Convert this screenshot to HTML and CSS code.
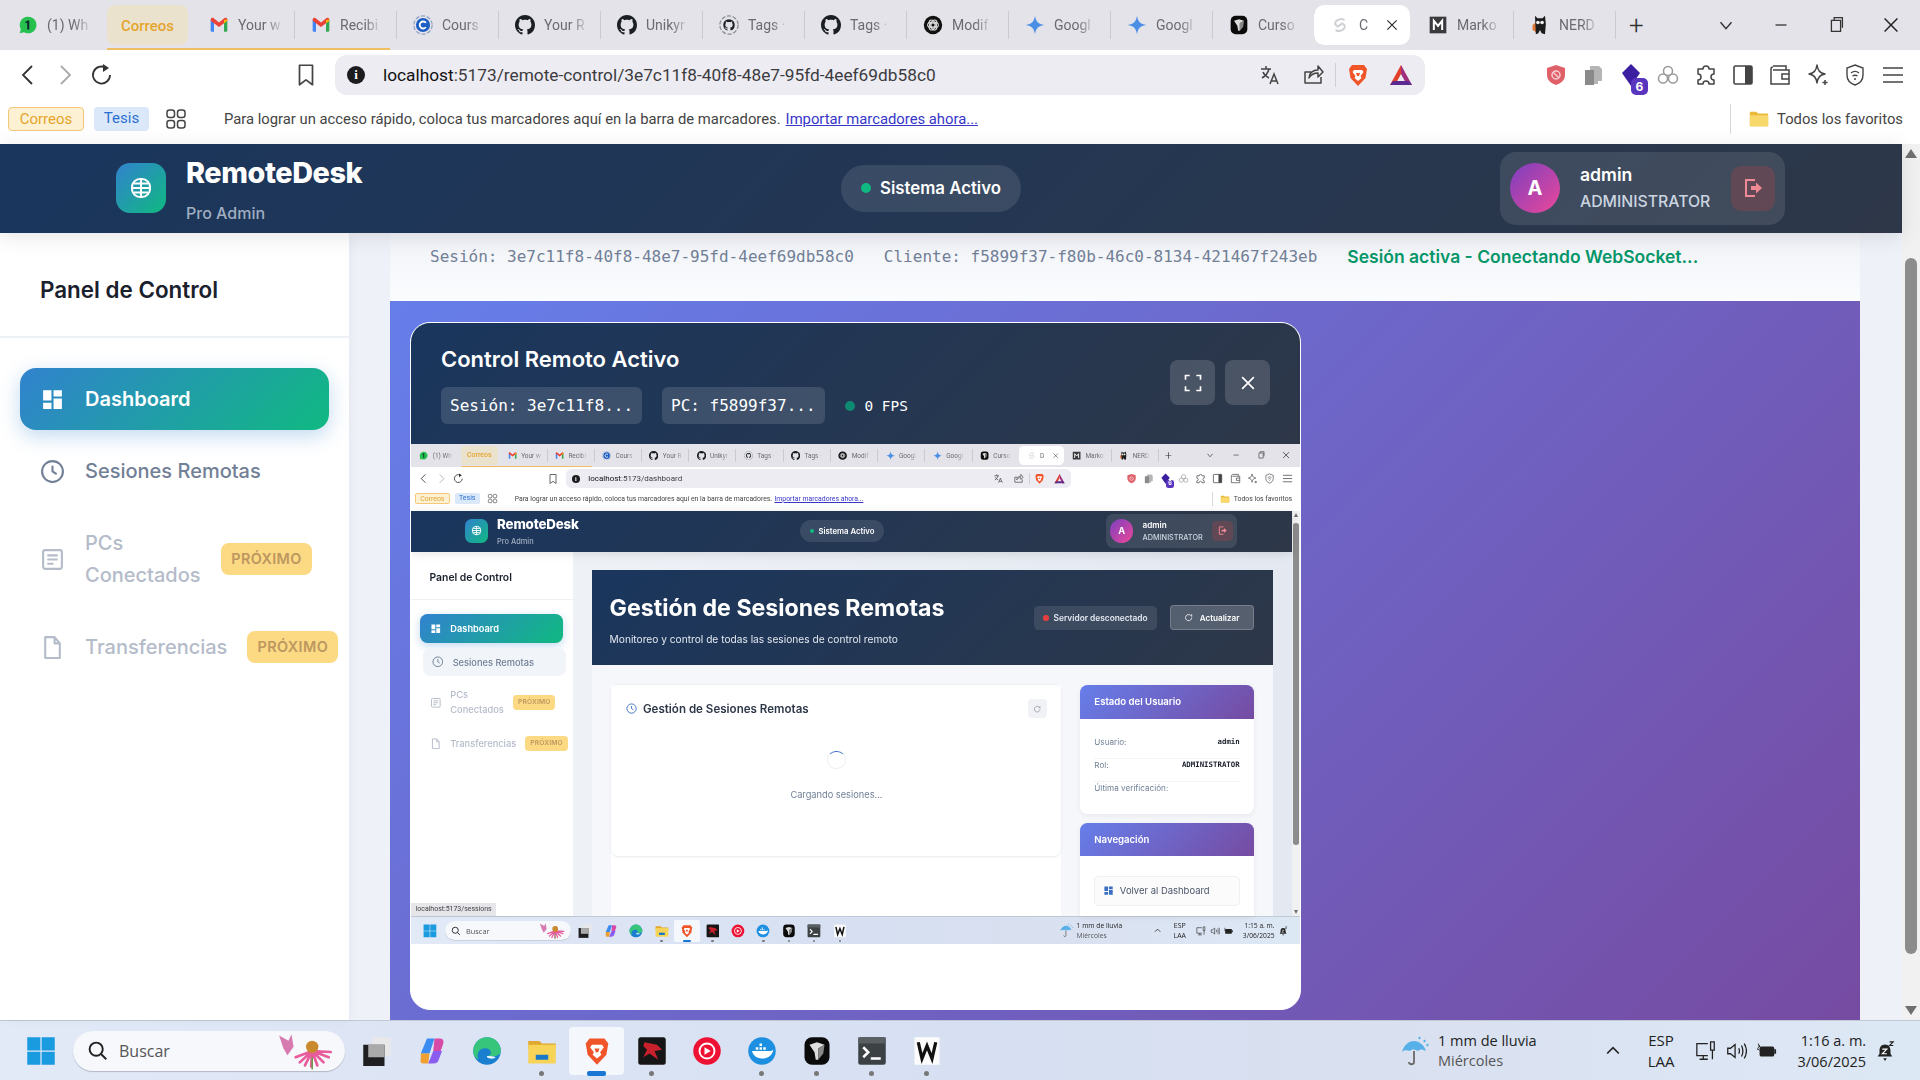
FILE: index.html
```html
<!DOCTYPE html>
<html lang="es">
<head>
    <meta charset="UTF-8">
    <meta name="viewport" content="width=device-width, initial-scale=1.0">
    <title>RemoteDesk - Control Remoto</title>
    <link rel="stylesheet" href="styles.css">
</head>
<body>
    <!-- icon set, used by both the real page and the screenshot inside it -->
    <svg class="icon-defs" xmlns="http://www.w3.org/2000/svg">
        <symbol id="i-wa" viewBox="0 0 24 24"><path fill="#25c04e" d="M12 2a10 10 0 0 0-8.6 15L2 22l5.2-1.3A10 10 0 1 0 12 2z"/><path fill="#123" d="M13.5 6.500v11h-2.400V9.300L9 10V8l2.900-1.500z"/></symbol>
        <symbol id="i-gmail" viewBox="0 0 24 24"><path fill="#4285f4" d="M2 6h4v14H3.500A1.500 1.500 0 0 1 2 18.500z"/><path fill="#34a853" d="M18 6h4v12.500a1.500 1.500 0 0 1-1.500 1.500H18z"/><path fill="#ea4335" d="M2 5.500C2 3.500 4.300 2.700 5.700 3.800L12 9l6.300-5.200C19.700 2.700 22 3.500 22 5.500V7l-4 3-6 4.500L6 10 2 7z"/><path fill="#fbbc04" d="M18 6l4-.5V7l-4 3z"/></symbol>
        <symbol id="i-coursera" viewBox="0 0 24 24"><circle cx="12" cy="12" r="11" fill="none" stroke="#8fa3c4" stroke-width="1.5" stroke-dasharray="5 2"/><circle cx="12" cy="12" r="8.5" fill="#1f5fc4"/><path d="M15.500 9.300a4.200 4.200 0 1 0 0 5.400" fill="none" stroke="#fff" stroke-width="2.2"/></symbol>
        <symbol id="i-gh" viewBox="0 0 16 16"><path fill="#1b1f24" d="M8 0C3.580 0 0 3.580 0 8c0 3.540 2.290 6.530 5.470 7.590.4.070.55-.17.55-.38 0-.19-.01-.82-.01-1.490-2.010.37-2.530-.49-2.690-.94-.09-.23-.48-.94-.82-1.130-.28-.15-.68-.52-.01-.53.63-.01 1.080.58 1.230.82.72 1.210 1.870.87 2.330.66.070-.52.28-.87.51-1.070-1.780-.2-3.640-.89-3.640-3.950 0-.87.31-1.590.82-2.150-.08-.2-.36-1.020.08-2.120 0 0 .67-.21 2.200.82.64-.18 1.320-.27 2-.27.68 0 1.360.09 2 .27 1.530-1.040 2.200-.82 2.200-.82.44 1.100.16 1.920.08 2.120.51.56.82 1.270.82 2.150 0 3.070-1.870 3.750-3.650 3.950.29.25.54.73.54 1.480 0 1.070-.01 1.930-.01 2.200 0 .21.15.46.55.38A8.013 8.013 0 0 0 16 8c0-4.420-3.580-8-8-8z"/></symbol>
        <symbol id="i-gh-ring" viewBox="0 0 24 24"><circle cx="12" cy="12" r="11" fill="none" stroke="#8a8f98" stroke-width="1.6" stroke-dasharray="5 2"/><svg x="5" y="5" width="14" height="14" viewBox="0 0 16 16"><use href="#i-gh"/></svg></symbol>
        <symbol id="i-ai" viewBox="0 0 24 24"><circle cx="12" cy="12" r="11" fill="#111"/><g fill="none" stroke="#ddd" stroke-width="1.3"><circle cx="12" cy="12" r="2.5"/><ellipse cx="12" cy="12" rx="6.5" ry="3.5"/><ellipse cx="12" cy="12" rx="6.5" ry="3.5" transform="rotate(60 12 12)"/><ellipse cx="12" cy="12" rx="6.5" ry="3.5" transform="rotate(120 12 12)"/></g></symbol>
        <symbol id="i-gem" viewBox="0 0 24 24"><path fill="#4a8ee6" d="M12 1c1 7 4 10 11 11-7 1-10 4-11 11-1-7-4-10-11-11 7-1 10-4 11-11z"/></symbol>
        <symbol id="i-cursor" viewBox="0 0 24 24"><rect x="2" y="1" width="20" height="22" rx="6" fill="#0b0b0b"/><path fill="#ddd" d="M6 7l6-2 6 2-5 3v9l-2 0-1-6z"/><path fill="#888" d="M13 10l5-3-1 7-4 5z"/></symbol>
        <symbol id="i-svelte" viewBox="0 0 24 24"><path fill="none" stroke="#cfd0d4" stroke-width="2.4" stroke-linecap="round" d="M16.500 5.500c-3-2-5.500-.5-8 1-2.500 1.500-3 4.500-1 6M7.500 18.500c3 2 5.500.5 8-1 2.500-1.500 3-4.500 1-6M9 14l6-4"/></symbol>
        <symbol id="i-md" viewBox="0 0 24 24"><rect x="2" y="2" width="20" height="20" fill="#3a3a3e"/><path fill="none" stroke="#fff" stroke-width="2.4" d="M7 18V7l5 6 5-6v11"/></symbol>
        <symbol id="i-nerd" viewBox="0 0 24 24"><path fill="#e0793a" d="M3 12l4-3 1 12-5-3z"/><path fill="#1b1b1b" d="M6 1l3 3h6l3-3 1 10-1 12-4-1-2-4-2 4-3 1z"/><circle cx="9.5" cy="9" r="2.2" fill="#eee"/><circle cx="14.5" cy="9" r="2.2" fill="#eee"/></symbol>
        <symbol id="i-brave" viewBox="0 0 24 24"><path fill="#f0552a" d="M6 2h12l3 4-1.500 9L12 23 4.500 15 3 6z"/><path fill="#fff" d="M8 7h8l1.500 2-3 4 1 2-3.500 3-3.500-3 1-2-3-4z"/><path fill="#f0552a" d="M10 10h4l-1 3h-2z"/></symbol>
        <symbol id="i-bat" viewBox="0 0 24 24"><path fill="#e2402b" d="M12 2L1 22h5l6-11 1-6z"/><path fill="#a12e7c" d="M12 2l11 20h-5l-6-11z"/><path fill="#5b2a90" d="M1 22h22l-3-4H4z"/></symbol>
        <symbol id="i-translate" viewBox="0 0 24 24"><path fill="none" stroke="#444" stroke-width="1.5" d="M3 6h10M8 3v3M11 6c-1 4-3.500 7-7 9M5 9c1 2.500 3 4.500 6 6M12 21l4-10 4 10M13.500 18h5"/></symbol>
        <symbol id="i-share" viewBox="0 0 24 24"><path fill="none" stroke="#444" stroke-width="1.5" stroke-linejoin="round" d="M20 14v6H4V9h6M8 15c0-5 4-8 9-8V3l5 6-5 5v-4c-4 0-7 1.500-9 5z"/></symbol>
        <symbol id="i-shield" viewBox="0 0 24 24"><path fill="#e0606a" d="M12 2l9 3v7c0 5-4 8.500-9 10-5-1.500-9-5-9-10V5z"/><circle cx="12" cy="12" r="4" fill="none" stroke="#f7cdd0" stroke-width="1.5"/><path stroke="#f7cdd0" stroke-width="1.5" d="M9 9l6 6"/></symbol>
        <symbol id="i-pages" viewBox="0 0 24 24"><path fill="#b5b5b5" d="M9 3h9l3 3v12h-4v3H6V8h3z"/><path fill="#8a8a8a" d="M4 7h9v15H4z"/></symbol>
        <symbol id="i-gem-ext" viewBox="0 0 24 24"><path fill="#3b1fa0" d="M12 1l9 9-9 13-9-13z"/></symbol>
        <symbol id="i-rings" viewBox="0 0 24 24"><g fill="none" stroke="#9a9a9a" stroke-width="1.5"><circle cx="12" cy="8" r="4.5"/><circle cx="7" cy="15.5" r="4.5"/><circle cx="17" cy="15.5" r="4.5"/></g></symbol>
        <symbol id="i-puzzle" viewBox="0 0 24 24"><path fill="none" stroke="#444" stroke-width="1.5" stroke-linejoin="round" d="M9 6a3 3 0 1 1 6 0h5v5a3 3 0 1 0 0 6v4h-5a3 3 0 1 0-6 0H4v-4a3 3 0 1 0 0-6V6z"/></symbol>
        <symbol id="i-panel" viewBox="0 0 24 24"><rect x="3" y="3" width="18" height="18" rx="1.5" fill="none" stroke="#444" stroke-width="1.6"/><rect x="14" y="3" width="7" height="18" fill="#444"/></symbol>
        <symbol id="i-wallet" viewBox="0 0 24 24"><path fill="none" stroke="#444" stroke-width="1.5" d="M5 3h13v4M3 6a2 2 0 0 1 2-2v0M3 6v15h18V7H5M21 11h-7v5h7"/></symbol>
        <symbol id="i-leo" viewBox="0 0 24 24"><path fill="none" stroke="#444" stroke-width="1.5" stroke-linejoin="round" d="M11 2c1 6 3 8 8 9-5 1-7 3-8 9-1-6-3-8-8-9 5-1 7-3 8-9zM19 17v5M16.500 19.500h5"/></symbol>
        <symbol id="i-vpn" viewBox="0 0 24 24"><path fill="none" stroke="#444" stroke-width="1.4" d="M12 2l8 3v7c0 5-3.500 8.500-8 10-4.500-1.500-8-5-8-10V5zM8 10c2.500-2 5.500-2 8 0M9.500 13c1.500-1 3.500-1 5 0"/><circle cx="12" cy="16" r="1" fill="#444"/></symbol>
        <symbol id="i-bookmark" viewBox="0 0 24 24"><path fill="none" stroke="#444" stroke-width="1.6" stroke-linejoin="round" d="M6 3h12v18l-6-4.500L6 21z"/></symbol>
        <symbol id="i-apps" viewBox="0 0 24 24"><g fill="none" stroke="#444" stroke-width="1.5"><rect x="3" y="3" width="7.5" height="7.5" rx="2.5"/><rect x="13.5" y="3" width="7.5" height="7.5" rx="2.5"/><rect x="3" y="13.5" width="7.5" height="7.5" rx="2.5"/><rect x="13.5" y="13.5" width="7.5" height="7.5" rx="2.5"/></g></symbol>
        <symbol id="i-folder" viewBox="0 0 24 24"><path fill="#e8b93a" d="M2 5a1 1 0 0 1 1-1h6l2 2h10a1 1 0 0 1 1 1v12a1 1 0 0 1-1 1H3a1 1 0 0 1-1-1z"/><path fill="#f8d76b" d="M2 8h20v11a1 1 0 0 1-1 1H3a1 1 0 0 1-1-1z"/></symbol>
        <symbol id="i-close-dark" viewBox="0 0 24 24"><path fill="none" stroke="#222" stroke-width="1.6" d="M5 5l14 14M19 5L5 19"/></symbol>
        <symbol id="i-chev" viewBox="0 0 24 24"><path fill="none" stroke="#333" stroke-width="1.6" d="M6 9l6 7 6-7"/></symbol>
        <symbol id="i-chev-up" viewBox="0 0 24 24"><path fill="none" stroke="#222" stroke-width="2" d="M5 15l7-7 7 7"/></symbol>
        <symbol id="i-min" viewBox="0 0 24 24"><path stroke="#333" stroke-width="1.4" d="M6 12h12"/></symbol>
        <symbol id="i-restore" viewBox="0 0 24 24"><path fill="none" stroke="#333" stroke-width="1.4" d="M7 7h10v12H7zM10 7V4h9v11"/></symbol>
        <symbol id="i-back" viewBox="0 0 24 24"><path fill="none" stroke="#333" stroke-width="1.8" d="M16 3l-9 9 9 9"/></symbol>
        <symbol id="i-fwd" viewBox="0 0 24 24"><path fill="none" stroke="#aaa" stroke-width="1.8" d="M8 3l9 9-9 9"/></symbol>
        <symbol id="i-reload" viewBox="0 0 24 24"><path fill="none" stroke="#333" stroke-width="1.8" d="M20 12a8.500 8.500 0 1 1-4-7.200"/><path fill="#333" d="M13 1l6 4-6 4z"/></symbol>
        <symbol id="i-menu" viewBox="0 0 24 24"><path stroke="#444" stroke-width="1.6" d="M2 5h20M2 12h20M2 19h20"/></symbol>

        <symbol id="i-globe" viewBox="0 0 24 24"><g fill="none" stroke="#fff" stroke-width="2"><rect x="3" y="3" width="18" height="18" rx="8"/><path d="M3 12h18M5 7.500h14M5 16.500h14M12 3v18"/></g></symbol>
        <symbol id="i-logout" viewBox="0 0 24 24"><path fill="none" stroke="#f08a94" stroke-width="2" d="M14 4H5v16h9"/><path fill="#f08a94" d="M10 10h5V6.500l6 5.500-6 5.500V14h-5z"/></symbol>
        <symbol id="i-dash" viewBox="0 0 24 24"><path fill="currentColor" d="M3 3h8v10H3zM13 3h8v6h-8zM13 11h8v10h-8zM3 15h8v6H3z"/></symbol>
        <symbol id="i-clock" viewBox="0 0 24 24"><g fill="none" stroke="currentColor" stroke-width="2"><circle cx="12" cy="12" r="10"/><path d="M12 6.500V12l4 2.500"/></g></symbol>
        <symbol id="i-news" viewBox="0 0 24 24"><g fill="none" stroke="currentColor" stroke-width="2"><rect x="3" y="3" width="18" height="18" rx="2"/><path d="M7 8h10M7 12h10M7 16h6"/></g></symbol>
        <symbol id="i-file" viewBox="0 0 24 24"><path fill="none" stroke="currentColor" stroke-width="2" stroke-linejoin="round" d="M5 2h9l5 6v14H5zM14 2v6h5"/></symbol>
        <symbol id="i-expand" viewBox="0 0 24 24"><path fill="none" stroke="#fff" stroke-width="2" d="M3 8V3h5M16 3h5v5M21 16v5h-5M8 21H3v-5"/></symbol>
        <symbol id="i-close" viewBox="0 0 24 24"><path fill="none" stroke="#fff" stroke-width="2" d="M5 5l14 14M19 5L5 19"/></symbol>
        <symbol id="i-refresh" viewBox="0 0 24 24"><path fill="none" stroke="currentColor" stroke-width="2" d="M20 12a8 8 0 1 1-2.500-5.800L20 9V3"/></symbol>

        <symbol id="i-win" viewBox="0 0 24 24"><path fill="#1a9be0" d="M1 1h10.500v10.500H1zM12.500 1H23v10.500H12.500zM1 12.500h10.500V23H1zM12.500 12.500H23V23H12.500z"/></symbol>
        <symbol id="i-search" viewBox="0 0 24 24"><g fill="none" stroke="#222" stroke-width="2.2"><circle cx="10.5" cy="10.5" r="7.5"/><path d="M16 16l6 6"/></g></symbol>
        <symbol id="i-flower" viewBox="0 0 60 36"><g stroke="#e85c9c" stroke-width="2.6" stroke-linecap="round"><path d="M36 18L20 24M36 18L24 29M36 18L29 32M36 18L35 33M36 18L41 32M36 18L47 29M36 18L52 24M36 18L54 19"/></g><circle cx="36" cy="14" r="6" fill="#c98a2e"/><path stroke="#6a9a4a" stroke-width="1.5" d="M36 24v12"/><path fill="#d77ab0" d="M4 3l9 5 3-6 2 12-6 8-4-7z"/></symbol>
        <symbol id="i-task" viewBox="0 0 24 24"><rect x="8" y="1" width="15" height="15" fill="#e8e8ea"/><rect x="1" y="7" width="17" height="17" fill="#1f1f22"/><rect x="5" y="7" width="13" height="10" fill="#aaa"/></symbol>
        <symbol id="i-copilot" viewBox="0 0 24 24"><path fill="#3a8cf0" d="M8 2h6l-4 12H3z"/><path fill="#f0a030" d="M3 14h7l-1 8H5q-3 0-2-4z"/><path fill="#d84aa8" d="M14 2h4q4 0 3 4l-2 6h-6z"/><path fill="#8a5cf0" d="M13 12h7l-3 8q-1 2-4 2H9z"/></symbol>
        <symbol id="i-edge" viewBox="0 0 24 24"><circle cx="12" cy="12" r="11" fill="#1b7fd0"/><path fill="#37c57c" d="M1 12a11 11 0 0 1 22 0c0 2-2 4-5 4h-5c3-1 3-5-1-6-5-1-9 3-7 9-3-2-4-4-4-7z"/><path fill="#eaf6fb" d="M12 16c3 0 5 0 7 1-1 1-4 2-7 0z"/></symbol>
        <symbol id="i-explorer" viewBox="0 0 24 24"><path fill="#e0a82e" d="M1 4h9l2 2h11v4H1z"/><path fill="#f7d358" d="M1 7h22v15H1z"/><rect x="7" y="15" width="10" height="4" fill="#1a78c8"/></symbol>
        <symbol id="i-msi" viewBox="0 0 24 24"><rect x="1" y="1" width="22" height="22" rx="2" fill="#161616"/><path fill="#c8202c" d="M6 5l10 2 4 4-6 1 3 7-7-5-5 3 3-6-3-3z"/></symbol>
        <symbol id="i-yt" viewBox="0 0 24 24"><circle cx="12" cy="12" r="11" fill="#ee1133"/><circle cx="12" cy="12" r="6" fill="none" stroke="#fff" stroke-width="1.5"/><path fill="#fff" d="M10 9l5 3-5 3z"/></symbol>
        <symbol id="i-docker" viewBox="0 0 24 24"><circle cx="12" cy="12" r="11" fill="#1d8fe0"/><path fill="#fff" d="M4 12h15c1 0 1.500-1 2-1-.5 4-4 7-8 7-5 0-8-2-9-6z"/><path fill="#fff" d="M7 9h2v2H7zM10 9h2v2h-2zM13 9h2v2h-2zM10 6h2v2h-2z"/></symbol>
        <symbol id="i-term" viewBox="0 0 24 24"><rect x="1" y="1" width="22" height="22" rx="2" fill="#3c4144"/><rect x="1" y="1" width="22" height="5" fill="#5a5f62"/><path fill="none" stroke="#fff" stroke-width="2" d="M5 9l4 4-4 4M11 18h8"/></symbol>
        <symbol id="i-word" viewBox="0 0 24 24"><rect x="2" y="1" width="20" height="22" fill="#fbfbfb"/><path fill="none" stroke="#111" stroke-width="2.6" d="M5 5l3 13 4-10 4 10 3-13"/></symbol>
        <symbol id="i-umbrella" viewBox="0 0 32 32"><path fill="#58b0e8" d="M3 17c2-8 8-11 12-11s10 3 12 10c-3-2-6-2-8 0-3-2-6-2-8 0-3-1-6-1-8 1z"/><path fill="none" stroke="#6a6a6a" stroke-width="1.8" d="M15 16v11c0 3-5 3-5 0"/><path stroke="#58b0e8" stroke-width="2" d="M20 4l1-2M25 7l1-2M28 11l1-2"/></symbol>
        <symbol id="i-monitor" viewBox="0 0 24 24"><path fill="none" stroke="#222" stroke-width="1.4" d="M14 4H2v13h12M5 21h9M9 17v4M17 2h4v9h-4zM19 11v10"/></symbol>
        <symbol id="i-volume" viewBox="0 0 24 24"><path fill="none" stroke="#222" stroke-width="1.4" d="M3 9v6h3l5 4V5L6 9zM15 9c1 2 1 4 0 6M18 6c2 4 2 8 0 12M21 4c3 5 3 11 0 16"/></symbol>
        <symbol id="i-battery" viewBox="0 0 24 24"><rect x="5" y="7" width="16" height="11" rx="2" fill="#222"/><path fill="#222" d="M21 10h2v5h-2zM3 3l3 4-3 2 3 3-4-2 2-3z"/></symbol>
        <symbol id="i-bell" viewBox="0 0 24 24"><path fill="#222" d="M12 5c-4 0-6 3-6 7v3l-2 3h16l-2-3v-3c0-4-2-7-6-7zM10 20h4l-2 3z"/><path fill="none" stroke="#fff" stroke-width="1.2" d="M9 10h5l-5 5h5"/><path fill="none" stroke="#222" stroke-width="1.2" d="M17 2h4l-4 4h4"/></symbol>
    </svg>

    <div class="screen">
        <div class="tabstrip">
            <div class="tab tab-first"><svg class="tab-icon"><use href="#i-wa"/></svg><span class="tab-title">(1) Wh</span></div>
            <div class="tab-group">Correos</div>
            <div class="tab"><svg class="tab-icon"><use href="#i-gmail"/></svg><span class="tab-title">Your w</span></div>
            <div class="tab"><svg class="tab-icon"><use href="#i-gmail"/></svg><span class="tab-title">Recibi</span></div>
            <div class="tab"><svg class="tab-icon"><use href="#i-coursera"/></svg><span class="tab-title">Cours</span></div>
            <div class="tab"><svg class="tab-icon"><use href="#i-gh"/></svg><span class="tab-title">Your R</span></div>
            <div class="tab"><svg class="tab-icon"><use href="#i-gh"/></svg><span class="tab-title">Unikyr</span></div>
            <div class="tab"><svg class="tab-icon"><use href="#i-gh-ring"/></svg><span class="tab-title">Tags ·</span></div>
            <div class="tab"><svg class="tab-icon"><use href="#i-gh"/></svg><span class="tab-title">Tags ·</span></div>
            <div class="tab"><svg class="tab-icon"><use href="#i-ai"/></svg><span class="tab-title">Modif</span></div>
            <div class="tab"><svg class="tab-icon"><use href="#i-gem"/></svg><span class="tab-title">Googl</span></div>
            <div class="tab"><svg class="tab-icon"><use href="#i-gem"/></svg><span class="tab-title">Googl</span></div>
            <div class="tab"><svg class="tab-icon"><use href="#i-cursor"/></svg><span class="tab-title">Curso</span></div>
            <div class="tab tab-active"><svg class="tab-icon"><use href="#i-svelte"/></svg><span class="tab-title">C</span><svg class="tab-close"><use href="#i-close-dark"/></svg></div>
            <div class="tab"><svg class="tab-icon"><use href="#i-md"/></svg><span class="tab-title">Marko</span></div>
            <div class="tab"><svg class="tab-icon"><use href="#i-nerd"/></svg><span class="tab-title">NERD</span></div>
            <span class="tab-new">+</span>
            <div class="window-btns">
                <svg class="win-btn"><use href="#i-chev"/></svg>
                <svg class="win-btn"><use href="#i-min"/></svg>
                <svg class="win-btn"><use href="#i-restore"/></svg>
                <svg class="win-btn"><use href="#i-close-dark"/></svg>
            </div>
        </div>
        <div class="toolbar">
            <svg class="nav-btn"><use href="#i-back"/></svg>
            <svg class="nav-btn nav-off"><use href="#i-fwd"/></svg>
            <svg class="nav-btn"><use href="#i-reload"/></svg>
            <svg class="tool-bookmark"><use href="#i-bookmark"/></svg>
            <div class="urlbar">
                <span class="url-info">i</span>
                <span class="url-text"><b>localhost</b>:5173/remote-control/3e7c11f8-40f8-48e7-95fd-4eef69db58c0</span>
                <svg class="url-icon"><use href="#i-translate"/></svg>
                <svg class="url-icon"><use href="#i-share"/></svg>
                <span class="url-sep"></span>
                <svg class="url-icon"><use href="#i-brave"/></svg>
                <svg class="url-icon"><use href="#i-bat"/></svg>
            </div>
            <div class="extensions">
                <svg class="ext"><use href="#i-shield"/></svg>
                <svg class="ext"><use href="#i-pages"/></svg>
                <span class="ext-badge-wrap"><svg class="ext"><use href="#i-gem-ext"/></svg><span class="ext-badge">6</span></span>
                <svg class="ext"><use href="#i-rings"/></svg>
                <svg class="ext"><use href="#i-puzzle"/></svg>
                <svg class="ext"><use href="#i-panel"/></svg>
                <svg class="ext"><use href="#i-wallet"/></svg>
                <svg class="ext"><use href="#i-leo"/></svg>
                <svg class="ext"><use href="#i-vpn"/></svg>
                <svg class="ext"><use href="#i-menu"/></svg>
            </div>
        </div>
        <div class="bookmarks">
            <span class="bm-chip bm-yellow">Correos</span>
            <span class="bm-chip bm-blue">Tesis</span>
            <svg class="bm-apps"><use href="#i-apps"/></svg>
            <span class="bm-msg">Para lograr un acceso rápido, coloca tus marcadores aquí en la barra de marcadores.</span>
            <a class="bm-link">Importar marcadores ahora...</a>
            <span class="bm-all"><svg class="bm-folder"><use href="#i-folder"/></svg>Todos los favoritos</span>
        </div>

        <div class="app">
            <div class="app-main">
                <header class="app-header">
                    <div class="brand">
                        <div class="brand-logo"><svg class="brand-globe"><use href="#i-globe"/></svg></div>
                        <div class="brand-text">
                            <div class="brand-name">RemoteDesk</div>
                            <div class="brand-sub">Pro Admin</div>
                        </div>
                    </div>
                    <div class="status-pill"><span class="status-dot"></span>Sistema Activo</div>
                    <div class="user-box">
                        <div class="user-avatar">A</div>
                        <div class="user-text">
                            <div class="user-name">admin</div>
                            <div class="user-role">ADMINISTRATOR</div>
                        </div>
                        <div class="logout-btn"><svg class="logout-icon"><use href="#i-logout"/></svg></div>
                    </div>
                </header>
                <div class="app-body">
                    <aside class="sidebar">
                        <div class="sidebar-title">Panel de Control</div>
                        <nav class="side-nav">
                            <a class="nav-item active"><svg class="nav-icon"><use href="#i-dash"/></svg>Dashboard</a>
                            <a class="nav-item"><svg class="nav-icon"><use href="#i-clock"/></svg>Sesiones Remotas</a>
                            <a class="nav-item disabled nav-tall"><svg class="nav-icon"><use href="#i-news"/></svg><span class="nav-wrap">PCs Conectados</span><span class="soon">PRÓXIMO</span></a>
                            <a class="nav-item disabled"><svg class="nav-icon"><use href="#i-file"/></svg>Transferencias<span class="soon">PRÓXIMO</span></a>
                        </nav>
                    </aside>
                    <main class="remote-main">
                        <div class="session-info">
                            <span class="mono">Sesión: 3e7c11f8-40f8-48e7-95fd-4eef69db58c0</span>
                            <span class="mono">Cliente: f5899f37-f80b-46c0-8134-421467f243eb</span>
                            <span class="session-state">Sesión activa - Conectando WebSocket...</span>
                        </div>
                        <div class="stage">
                            <section class="remote-card">
                                <div class="remote-head">
                                    <div>
                                        <h2 class="remote-title">Control Remoto Activo</h2>
                                        <div class="remote-meta">
                                            <span class="meta-chip">Sesión: 3e7c11f8...</span>
                                            <span class="meta-chip">PC: f5899f37...</span>
                                            <span class="meta-fps"><span class="fps-dot"></span>0 FPS</span>
                                        </div>
                                    </div>
                                    <div class="remote-actions">
                                        <div class="remote-btn"><svg class="remote-btn-icon"><use href="#i-expand"/></svg></div>
                                        <div class="remote-btn"><svg class="remote-btn-icon"><use href="#i-close"/></svg></div>
                                    </div>
                                </div>

                                <!-- the remote desktop stream: same chrome, zoomed down -->
                                <div class="stream">
                                    <div class="screen screen-nested">
                                        <div class="tabstrip">
                                            <div class="tab tab-first"><svg class="tab-icon"><use href="#i-wa"/></svg><span class="tab-title">(1) Wh</span></div>
                                            <div class="tab-group">Correos</div>
                                            <div class="tab"><svg class="tab-icon"><use href="#i-gmail"/></svg><span class="tab-title">Your w</span></div>
                                            <div class="tab"><svg class="tab-icon"><use href="#i-gmail"/></svg><span class="tab-title">Recibi</span></div>
                                            <div class="tab"><svg class="tab-icon"><use href="#i-coursera"/></svg><span class="tab-title">Cours</span></div>
                                            <div class="tab"><svg class="tab-icon"><use href="#i-gh"/></svg><span class="tab-title">Your R</span></div>
                                            <div class="tab"><svg class="tab-icon"><use href="#i-gh"/></svg><span class="tab-title">Unikyr</span></div>
                                            <div class="tab"><svg class="tab-icon"><use href="#i-gh-ring"/></svg><span class="tab-title">Tags ·</span></div>
                                            <div class="tab"><svg class="tab-icon"><use href="#i-gh"/></svg><span class="tab-title">Tags ·</span></div>
                                            <div class="tab"><svg class="tab-icon"><use href="#i-ai"/></svg><span class="tab-title">Modif</span></div>
                                            <div class="tab"><svg class="tab-icon"><use href="#i-gem"/></svg><span class="tab-title">Googl</span></div>
                                            <div class="tab"><svg class="tab-icon"><use href="#i-gem"/></svg><span class="tab-title">Googl</span></div>
                                            <div class="tab"><svg class="tab-icon"><use href="#i-cursor"/></svg><span class="tab-title">Curso</span></div>
                                            <div class="tab tab-active"><svg class="tab-icon"><use href="#i-svelte"/></svg><span class="tab-title">D</span><svg class="tab-close"><use href="#i-close-dark"/></svg></div>
                                            <div class="tab"><svg class="tab-icon"><use href="#i-md"/></svg><span class="tab-title">Marko</span></div>
                                            <div class="tab"><svg class="tab-icon"><use href="#i-nerd"/></svg><span class="tab-title">NERD</span></div>
                                            <span class="tab-new">+</span>
                                            <div class="window-btns">
                                                <svg class="win-btn"><use href="#i-chev"/></svg>
                                                <svg class="win-btn"><use href="#i-min"/></svg>
                                                <svg class="win-btn"><use href="#i-restore"/></svg>
                                                <svg class="win-btn"><use href="#i-close-dark"/></svg>
                                            </div>
                                        </div>
                                        <div class="toolbar">
                                            <svg class="nav-btn"><use href="#i-back"/></svg>
                                            <svg class="nav-btn nav-off"><use href="#i-fwd"/></svg>
                                            <svg class="nav-btn"><use href="#i-reload"/></svg>
                                            <svg class="tool-bookmark"><use href="#i-bookmark"/></svg>
                                            <div class="urlbar">
                                                <span class="url-info">i</span>
                                                <span class="url-text"><b>localhost</b>:5173/dashboard</span>
                                                <svg class="url-icon"><use href="#i-translate"/></svg>
                                                <svg class="url-icon"><use href="#i-share"/></svg>
                                                <span class="url-sep"></span>
                                                <svg class="url-icon"><use href="#i-brave"/></svg>
                                                <svg class="url-icon"><use href="#i-bat"/></svg>
                                            </div>
                                            <div class="extensions">
                                                <svg class="ext"><use href="#i-shield"/></svg>
                                                <svg class="ext"><use href="#i-pages"/></svg>
                                                <span class="ext-badge-wrap"><svg class="ext"><use href="#i-gem-ext"/></svg><span class="ext-badge">6</span></span>
                                                <svg class="ext"><use href="#i-rings"/></svg>
                                                <svg class="ext"><use href="#i-puzzle"/></svg>
                                                <svg class="ext"><use href="#i-panel"/></svg>
                                                <svg class="ext"><use href="#i-wallet"/></svg>
                                                <svg class="ext"><use href="#i-leo"/></svg>
                                                <svg class="ext"><use href="#i-vpn"/></svg>
                                                <svg class="ext"><use href="#i-menu"/></svg>
                                            </div>
                                        </div>
                                        <div class="bookmarks">
                                            <span class="bm-chip bm-yellow">Correos</span>
                                            <span class="bm-chip bm-blue">Tesis</span>
                                            <svg class="bm-apps"><use href="#i-apps"/></svg>
                                            <span class="bm-msg">Para lograr un acceso rápido, coloca tus marcadores aquí en la barra de marcadores.</span>
                                            <a class="bm-link">Importar marcadores ahora...</a>
                                            <span class="bm-all"><svg class="bm-folder"><use href="#i-folder"/></svg>Todos los favoritos</span>
                                        </div>
                                        <div class="app">
                                            <div class="app-main">
                                                <header class="app-header">
                                                    <div class="brand">
                                                        <div class="brand-logo"><svg class="brand-globe"><use href="#i-globe"/></svg></div>
                                                        <div class="brand-text">
                                                            <div class="brand-name">RemoteDesk</div>
                                                            <div class="brand-sub">Pro Admin</div>
                                                        </div>
                                                    </div>
                                                    <div class="status-pill"><span class="status-dot"></span>Sistema Activo</div>
                                                    <div class="user-box">
                                                        <div class="user-avatar">A</div>
                                                        <div class="user-text">
                                                            <div class="user-name">admin</div>
                                                            <div class="user-role">ADMINISTRATOR</div>
                                                        </div>
                                                        <div class="logout-btn"><svg class="logout-icon"><use href="#i-logout"/></svg></div>
                                                    </div>
                                                </header>
                                                <div class="app-body">
                                                    <aside class="sidebar">
                                                        <div class="sidebar-title">Panel de Control</div>
                                                        <nav class="side-nav">
                                                            <a class="nav-item active"><svg class="nav-icon"><use href="#i-dash"/></svg>Dashboard</a>
                                                            <a class="nav-item hover"><svg class="nav-icon"><use href="#i-clock"/></svg>Sesiones Remotas</a>
                                                            <a class="nav-item disabled nav-tall"><svg class="nav-icon"><use href="#i-news"/></svg><span class="nav-wrap">PCs Conectados</span><span class="soon">PRÓXIMO</span></a>
                                                            <a class="nav-item disabled"><svg class="nav-icon"><use href="#i-file"/></svg>Transferencias<span class="soon">PRÓXIMO</span></a>
                                                        </nav>
                                                    </aside>
                                                    <main class="dash-main">
                                                        <div class="dash-panel">
                                                            <div class="dash-banner">
                                                                <div>
                                                                    <h1 class="dash-title">Gestión de Sesiones Remotas</h1>
                                                                    <p class="dash-sub">Monitoreo y control de todas las sesiones de control remoto</p>
                                                                </div>
                                                                <div class="dash-banner-actions">
                                                                    <span class="server-state"><span class="server-dot"></span>Servidor desconectado</span>
                                                                    <span class="update-btn"><svg class="update-icon"><use href="#i-refresh"/></svg>Actualizar</span>
                                                                </div>
                                                            </div>
                                                            <div class="dash-grid">
                                                                <div class="dash-left">
                                                                    <section class="sessions-card">
                                                                        <div class="sessions-head">
                                                                            <svg class="sessions-icon"><use href="#i-clock"/></svg>
                                                                            <h3 class="sessions-title">Gestión de Sesiones Remotas</h3>
                                                                            <span class="sessions-refresh"><svg class="sessions-refresh-icon"><use href="#i-refresh"/></svg></span>
                                                                        </div>
                                                                        <div class="spinner"></div>
                                                                        <div class="loading-text">Cargando sesiones...</div>
                                                                    </section>
                                                                    <div class="sessions-below"></div>
                                                                </div>
                                                                <div class="dash-right">
                                                                    <section class="side-card">
                                                                        <div class="side-card-head">Estado del Usuario</div>
                                                                        <div class="side-card-body">
                                                                            <div class="kv"><span>Usuario:</span><b class="kv-val">admin</b></div>
                                                                            <div class="kv"><span>Rol:</span><b class="kv-val">ADMINISTRATOR</b></div>
                                                                            <div class="kv kv-last"><span>Última verificación:</span></div>
                                                                        </div>
                                                                    </section>
                                                                    <section class="side-card side-card-fill">
                                                                        <div class="side-card-head">Navegación</div>
                                                                        <div class="side-card-body">
                                                                            <div class="back-link"><svg class="back-icon"><use href="#i-dash"/></svg>Volver al Dashboard</div>
                                                                        </div>
                                                                    </section>
                                                                </div>
                                                            </div>
                                                        </div>
                                                    </main>
                                                </div>
                                            </div>
                                            <div class="scrollbar">
                                                <span class="arrow-up"></span>
                                                <span class="thumb thumb-nested"></span>
                                                <span class="arrow-down"></span>
                                            </div>
                                            <div class="link-status">localhost:5173/sessions</div>
                                        </div>
                                        <footer class="taskbar">
                                            <svg class="tb-start"><use href="#i-win"/></svg>
                                            <div class="tb-search"><svg class="tb-search-icon"><use href="#i-search"/></svg>Buscar<svg class="tb-flower"><use href="#i-flower"/></svg></div>
                                            <div class="tb-apps">
                                                <span class="tb-app"><svg class="tb-app-icon"><use href="#i-task"/></svg></span>
                                                <span class="tb-app"><svg class="tb-app-icon"><use href="#i-copilot"/></svg></span>
                                                <span class="tb-app"><svg class="tb-app-icon"><use href="#i-edge"/></svg></span>
                                                <span class="tb-app tb-open"><svg class="tb-app-icon"><use href="#i-explorer"/></svg></span>
                                                <span class="tb-app tb-current"><svg class="tb-app-icon"><use href="#i-brave"/></svg></span>
                                                <span class="tb-app tb-open"><svg class="tb-app-icon"><use href="#i-msi"/></svg></span>
                                                <span class="tb-app"><svg class="tb-app-icon"><use href="#i-yt"/></svg></span>
                                                <span class="tb-app tb-open"><svg class="tb-app-icon"><use href="#i-docker"/></svg></span>
                                                <span class="tb-app tb-open"><svg class="tb-app-icon"><use href="#i-cursor"/></svg></span>
                                                <span class="tb-app tb-open"><svg class="tb-app-icon"><use href="#i-term"/></svg></span>
                                                <span class="tb-app tb-open"><svg class="tb-app-icon"><use href="#i-word"/></svg></span>
                                            </div>
                                            <div class="tb-weather"><svg class="tb-weather-icon"><use href="#i-umbrella"/></svg><div><div>1 mm de lluvia</div><div class="tb-dim">Miércoles</div></div></div>
                                            <svg class="tb-chevron"><use href="#i-chev-up"/></svg>
                                            <div class="tb-lang">ESP<br>LAA</div>
                                            <div class="tb-tray"><svg class="tb-tray-icon"><use href="#i-monitor"/></svg><svg class="tb-tray-icon"><use href="#i-volume"/></svg><svg class="tb-tray-icon"><use href="#i-battery"/></svg></div>
                                            <div class="tb-clock">1:15 a. m.<br>3/06/2025</div>
                                            <svg class="tb-bell"><use href="#i-bell"/></svg>
                                        </footer>
                                    </div>
                                </div>
                                <div class="stream-rest"></div>
                            </section>
                        </div>
                    </main>
                </div>
            </div>
            <div class="scrollbar">
                <span class="arrow-up"></span>
                <span class="thumb"></span>
                <span class="arrow-down"></span>
            </div>
        </div>

        <footer class="taskbar">
            <svg class="tb-start"><use href="#i-win"/></svg>
            <div class="tb-search"><svg class="tb-search-icon"><use href="#i-search"/></svg>Buscar<svg class="tb-flower"><use href="#i-flower"/></svg></div>
            <div class="tb-apps">
                <span class="tb-app"><svg class="tb-app-icon"><use href="#i-task"/></svg></span>
                <span class="tb-app"><svg class="tb-app-icon"><use href="#i-copilot"/></svg></span>
                <span class="tb-app"><svg class="tb-app-icon"><use href="#i-edge"/></svg></span>
                <span class="tb-app tb-open"><svg class="tb-app-icon"><use href="#i-explorer"/></svg></span>
                <span class="tb-app tb-current"><svg class="tb-app-icon"><use href="#i-brave"/></svg></span>
                <span class="tb-app tb-open"><svg class="tb-app-icon"><use href="#i-msi"/></svg></span>
                <span class="tb-app"><svg class="tb-app-icon"><use href="#i-yt"/></svg></span>
                <span class="tb-app tb-open"><svg class="tb-app-icon"><use href="#i-docker"/></svg></span>
                <span class="tb-app tb-open"><svg class="tb-app-icon"><use href="#i-cursor"/></svg></span>
                <span class="tb-app tb-open"><svg class="tb-app-icon"><use href="#i-term"/></svg></span>
                <span class="tb-app tb-open"><svg class="tb-app-icon"><use href="#i-word"/></svg></span>
            </div>
            <div class="tb-weather"><svg class="tb-weather-icon"><use href="#i-umbrella"/></svg><div><div>1 mm de lluvia</div><div class="tb-dim">Miércoles</div></div></div>
            <svg class="tb-chevron"><use href="#i-chev-up"/></svg>
            <div class="tb-lang">ESP<br>LAA</div>
            <div class="tb-tray"><svg class="tb-tray-icon"><use href="#i-monitor"/></svg><svg class="tb-tray-icon"><use href="#i-volume"/></svg><svg class="tb-tray-icon"><use href="#i-battery"/></svg></div>
            <div class="tb-clock">1:16 a. m.<br>3/06/2025</div>
            <svg class="tb-bell"><use href="#i-bell"/></svg>
        </footer>
    </div>
</body>
</html>
```

FILE: styles.css
```css
* {
    box-sizing: border-box;
}
html, body {
    margin: 0;
    padding: 0;
    overflow: hidden;
}
body {
    width: 1920px;
    height: 1080px;
    font-family: Inter, "Noto Sans", sans-serif;
    color: #2d3748;
}
.icon-defs {
    position: absolute;
    width: 0;
    height: 0;
}
.screen {
    display: flex;
    flex-direction: column;
    width: 1920px;
    height: 1080px;
    background: #fff;
    overflow: hidden;
}
.screen-nested {
    zoom: 0.463;
}

/* browser tabs */
.tabstrip {
    display: flex;
    align-items: center;
    flex: 0 0 50px;
    height: 50px;
    padding-left: 8px;
    background: #e3e3e9;
    font-family: Roboto, "Noto Sans", sans-serif;
    font-size: 14px;
    color: #6a6a70;
}
.tab {
    display: flex;
    align-items: center;
    flex: 0 0 102px;
    height: 28px;
    padding-left: 16px;
    border-right: 1px solid #cacad0;
}
.tab-first {
    flex-basis: 92px;
    padding-left: 10px;
    border-right: 0;
}
.tab-group {
    position: relative;
    flex: 0 0 81px;
    height: 40px;
    margin: 0 5px 0 7px;
    border-radius: 8px;
    background: #ebe2cd;
    color: #e5a52d;
    font-size: 15px;
    font-weight: 500;
    line-height: 42px;
    text-align: center;
}
/* the group underline runs on under its two gmail tabs */
.tab-group::after {
    content: "";
    position: absolute;
    left: 0;
    top: 43px;
    width: 283px;
    height: 2px;
    background: #efbd62;
}
.tab-icon {
    flex: 0 0 20px;
    width: 20px;
    height: 20px;
    margin-right: 9px;
}
.tab-title {
    flex: 0 0 auto;
    white-space: nowrap;
    -webkit-mask-image: linear-gradient(90deg, #000 65%, rgba(0, 0, 0, 0.25));
    mask-image: linear-gradient(90deg, #000 65%, rgba(0, 0, 0, 0.25));
}
.tab-active {
    flex-basis: 96px;
    height: 40px;
    margin: 0 2px 0 -1px;
    padding-right: 10px;
    border: 0;
    border-radius: 10px;
    background: #fff;
}
.tab-active .tab-title {
    flex: 1;
}
.tab-close {
    flex: 0 0 16px;
    width: 16px;
    height: 16px;
}
.tab-new {
    margin-left: 13px;
    font-size: 26px;
    font-weight: 300;
    line-height: 1;
    color: #333;
}
.window-btns {
    display: flex;
    align-items: center;
    gap: 33px;
    margin-left: auto;
    padding-right: 18px;
}
.win-btn {
    width: 22px;
    height: 22px;
}

/* address bar */
.toolbar {
    display: flex;
    align-items: center;
    flex: 0 0 47px;
    height: 47px;
    padding: 3px 14px 0 16px;
}
.nav-btn {
    width: 24px;
    height: 24px;
    margin-right: 13px;
}
.tool-bookmark {
    width: 26px;
    height: 26px;
    margin: 0 16px 0 166px;
}
.urlbar {
    display: flex;
    align-items: center;
    flex: 0 0 1090px;
    height: 40px;
    padding: 0 12px 0 12px;
    border-radius: 12px;
    background: #edecf3;
    font-family: Roboto, "Noto Sans", sans-serif;
    font-size: 17.3px;
    color: #3c3c40;
}
.urlbar b {
    font-weight: 400;
    color: #111;
}
.url-info {
    flex: 0 0 18px;
    height: 18px;
    margin-right: 18px;
    border-radius: 50%;
    background: #1c1c1e;
    color: #fff;
    font-family: "Liberation Serif", serif;
    font-size: 13px;
    font-weight: 700;
    line-height: 18px;
    text-align: center;
}
.url-text {
    flex: 1;
    white-space: nowrap;
}
.url-icon {
    width: 24px;
    height: 24px;
    margin-left: 19px;
}
.url-sep {
    width: 1px;
    height: 24px;
    margin: 0 -9px 0 10px;
    background: #cfcfd6;
}
.extensions {
    display: flex;
    align-items: center;
    gap: 13.4px;
    margin-left: 119px;
}
.ext {
    display: block;
    width: 24px;
    height: 24px;
}
.ext-badge-wrap {
    position: relative;
}
.ext-badge {
    position: absolute;
    right: -5px;
    bottom: -8px;
    width: 17px;
    height: 17px;
    border-radius: 5px;
    background: #5a35c0;
    color: #fff;
    font-size: 12px;
    font-weight: 700;
    line-height: 17px;
    text-align: center;
}

/* bookmarks row */
.bookmarks {
    display: flex;
    align-items: center;
    flex: 0 0 47px;
    height: 47px;
    padding: 0 17px 4px 8px;
    font-family: Roboto, "Noto Sans", sans-serif;
    font-size: 14.8px;
    color: #444;
}
.bm-chip {
    height: 24px;
    border-radius: 4px;
    font-size: 15px;
    line-height: 22px;
    text-align: center;
}
.bm-yellow {
    width: 76px;
    border: 1px solid #f4c878;
    background: #fdf1d3;
    color: #e5a52d;
}
.bm-blue {
    width: 55px;
    margin-left: 10px;
    background: #dbe8fa;
    color: #2a6fd0;
}
.bm-apps {
    width: 24px;
    height: 24px;
    margin: 0 36px 0 15px;
}
.bm-link {
    margin-left: 5px;
    color: #3636c8;
    text-decoration: underline;
}
.bm-all {
    display: flex;
    align-items: center;
    height: 30px;
    margin-left: auto;
    padding-left: 17px;
    border-left: 1px solid #d8d8d8;
}
.bm-folder {
    width: 22px;
    height: 22px;
    margin-right: 7px;
}

/* app shell */
.app {
    position: relative;
    display: flex;
    flex: 1;
    min-height: 0;
}
.app-main {
    display: flex;
    flex-direction: column;
    flex: 1;
    min-width: 0;
}
.app-header {
    position: relative;
    z-index: 2;
    display: flex;
    align-items: center;
    flex: 0 0 89px;
    height: 89px;
    padding: 0 117px 1px 116px;
    background: linear-gradient(135deg, #1a365d 0%, #2d3748 100%);
    box-shadow: 0 4px 20px rgba(0, 0, 0, 0.1);
    color: #fff;
}
.brand {
    display: flex;
    align-items: center;
    gap: 20px;
    width: 725px;
}
.brand-logo {
    display: flex;
    align-items: center;
    justify-content: center;
    width: 50px;
    height: 50px;
    border-radius: 14px;
    background: linear-gradient(135deg, #3182ce, #10b981);
}
.brand-globe {
    width: 24px;
    height: 24px;
}
.brand-name {
    margin-bottom: 13px;
    font-size: 28.8px;
    font-weight: 800;
    letter-spacing: -0.4px;
    line-height: 36px;
}
.brand-sub {
    font-size: 16px;
    font-weight: 500;
    line-height: 18px;
    color: #a0aec0;
}
.status-pill {
    display: flex;
    align-items: center;
    gap: 9px;
    height: 47px;
    padding: 0 20px;
    border-radius: 24px;
    background: rgba(255, 255, 255, 0.1);
    font-size: 16.8px;
    font-weight: 600;
}
.status-dot {
    width: 10px;
    height: 10px;
    border-radius: 50%;
    background: #10b981;
}
.user-box {
    display: flex;
    align-items: center;
    width: 285px;
    height: 73px;
    margin-left: auto;
    padding: 0 10px;
    border-radius: 16px;
    background: rgba(255, 255, 255, 0.1);
}
.user-avatar {
    flex: 0 0 50px;
    height: 50px;
    margin-right: 20px;
    border-radius: 50%;
    background: linear-gradient(135deg, #7b3fc0, #ec4899);
    font-size: 20px;
    font-weight: 700;
    line-height: 50px;
    text-align: center;
}
.user-text {
    flex: 1;
}
.user-name {
    margin-bottom: 6px;
    font-size: 17.6px;
    font-weight: 600;
    line-height: 22px;
}
.user-role {
    font-size: 15.8px;
    font-weight: 500;
    line-height: 20px;
    color: #cbd5e0;
}
.logout-btn {
    display: flex;
    align-items: center;
    justify-content: center;
    flex: 0 0 44px;
    height: 45px;
    border-radius: 10px;
    background: rgba(229, 62, 62, 0.2);
}
.logout-icon {
    width: 24px;
    height: 24px;
}
.app-body {
    display: flex;
    flex: 1;
    min-height: 0;
    background: #eef1f7;
}

/* sidebar */
.sidebar {
    flex: 0 0 349px;
    min-width: 0;
    background: #fff;
    box-shadow: 2px 0 10px rgba(0, 0, 0, 0.04);
}
.sidebar-title {
    height: 105px;
    padding: 41px 0 0 40px;
    border-bottom: 2px solid #edf0f4;
    font-size: 22.4px;
    font-weight: 600;
    line-height: 32px;
    color: #1a202c;
}
.side-nav {
    display: flex;
    flex-direction: column;
    gap: 10px;
    padding: 30px 20px 0;
}
.nav-item {
    display: flex;
    align-items: center;
    min-height: 62px;
    padding: 0 0 0 20px;
    border-radius: 16px;
    font-size: 20px;
    font-weight: 500;
    color: #718096;
    white-space: nowrap;
}
.nav-icon {
    flex: 0 0 25px;
    width: 25px;
    height: 25px;
    margin-right: 20px;
}
.nav-item.active {
    background: linear-gradient(135deg, #3182ce, #10b981);
    box-shadow: 0 6px 20px rgba(49, 130, 206, 0.3);
    color: #fff;
    font-weight: 600;
}
.nav-item.hover {
    margin: 0 -5px 0 5px;
    background: #f1f4f9;
}
.nav-item.disabled {
    margin-top: 5px;
    color: #b4bbc9;
}
.nav-tall {
    min-height: 84px;
}
.nav-wrap {
    width: 130px;
    line-height: 32px;
    white-space: normal;
}
.soon {
    flex: 0 0 91px;
    height: 32px;
    margin-left: 20px;
    border-radius: 8px;
    background: #fcd983;
    color: #bd9760;
    font-size: 14.4px;
    font-weight: 600;
    letter-spacing: 0.4px;
    line-height: 32px;
    text-align: center;
}
.nav-wrap + .soon {
    margin-left: 6px;
}

/* remote control view */
.remote-main {
    display: flex;
    flex-direction: column;
    flex: 1;
    min-width: 0;
    padding: 0 42px 0 41px;
}
.session-info {
    display: flex;
    gap: 30px;
    flex: 0 0 68px;
    height: 68px;
    padding: 13px 0 0 40px;
    background: linear-gradient(180deg, #f1f3f8, #fbfcfe);
    font-size: 16px;
    line-height: 22px;
    white-space: nowrap;
}
.mono {
    font-family: "DejaVu Sans Mono", monospace;
    color: #718096;
}
.session-state {
    font-size: 17.5px;
    font-weight: 600;
    color: #059669;
}
.stage {
    flex: 1;
    min-height: 0;
    padding: 21px 20px 10px;
    background: linear-gradient(135deg, #667eea, #764ba2);
}
.remote-card {
    display: flex;
    flex-direction: column;
    width: 891px;
    height: 688px;
    border: 1px solid #fff;
    border-radius: 20px;
    background: #fff;
    overflow: hidden;
}
.remote-head {
    display: flex;
    justify-content: space-between;
    flex: 0 0 121px;
    padding: 20px 30px 0;
    background: linear-gradient(135deg, #1a365d, #2d3748);
    color: #fff;
}
.remote-title {
    margin: 0 0 12px;
    font-size: 22px;
    font-weight: 600;
    line-height: 32px;
}
.remote-meta {
    display: flex;
    align-items: center;
    gap: 20px;
}
.meta-chip {
    height: 37px;
    padding: 0 9px;
    border-radius: 6px;
    background: rgba(255, 255, 255, 0.13);
    font-family: "DejaVu Sans Mono", monospace;
    font-size: 16px;
    line-height: 37px;
}
.meta-fps {
    display: flex;
    align-items: center;
    gap: 10px;
    font-family: "DejaVu Sans Mono", monospace;
    font-size: 14.4px;
}
.fps-dot {
    width: 10px;
    height: 10px;
    border-radius: 50%;
    background: #0f8a72;
}
.remote-actions {
    display: flex;
    gap: 10px;
    padding-top: 17px;
}
.remote-btn {
    display: flex;
    align-items: center;
    justify-content: center;
    width: 45px;
    height: 45px;
    border-radius: 8px;
    background: rgba(255, 255, 255, 0.15);
}
.remote-btn-icon {
    width: 20px;
    height: 20px;
}
.stream {
    flex: 0 0 500px;
    overflow: hidden;
    filter: blur(0.4px);
}
.stream-rest {
    flex: 1;
    background: #fff;
}

/* scrollbar */
.scrollbar {
    display: flex;
    flex-direction: column;
    align-items: center;
    flex: 0 0 18px;
    height: 100%;
    background: #f1f1f1;
}
.arrow-up {
    margin-top: 5px;
    border: 6px solid transparent;
    border-top: 0;
    border-bottom: 9px solid #6f6f6f;
}
.arrow-down {
    margin-top: auto;
    margin-bottom: 5px;
    border: 6px solid transparent;
    border-bottom: 0;
    border-top: 9px solid #6f6f6f;
}
.thumb {
    width: 12px;
    height: 696px;
    margin-top: 100px;
    border-radius: 6px;
    background: #8c8c8c;
}
.thumb-nested {
    margin-top: 12px;
}
.link-status {
    position: absolute;
    left: 0;
    bottom: 0;
    height: 28px;
    padding: 0 10px;
    background: #e6e6ea;
    font-family: Roboto, sans-serif;
    font-size: 15px;
    line-height: 28px;
    color: #444;
}

/* dashboard inside the stream */
.dash-main {
    flex: 1;
    min-width: 0;
    padding: 40px 40px 0 41px;
    background: linear-gradient(90deg, #eef1f6, #e3e8f1);
}
.dash-panel {
    display: flex;
    flex-direction: column;
    width: 1471px;
    height: 100%;
    background: #f6f7fa;
}
.dash-banner {
    display: flex;
    align-items: center;
    justify-content: space-between;
    flex: 0 0 205px;
    padding: 0 41px 0 39px;
    background: linear-gradient(135deg, #1a365d, #2d3748);
    color: #fff;
}
.dash-title {
    margin: 14px 0 22px;
    font-size: 50px;
    font-weight: 700;
    line-height: 60px;
}
.dash-sub {
    margin: 0;
    font-size: 22px;
    line-height: 30px;
    color: #e2e8f0;
}
.dash-banner-actions {
    display: flex;
    align-items: center;
    gap: 28px;
}
.server-state {
    display: flex;
    align-items: center;
    gap: 10px;
    height: 52px;
    padding: 0 20px;
    border-radius: 10px;
    background: rgba(255, 255, 255, 0.1);
    font-size: 18px;
    font-weight: 600;
    color: #e2e8f0;
}
.server-dot {
    width: 12px;
    height: 12px;
    border-radius: 50%;
    background: #e53e3e;
}
.update-btn {
    display: flex;
    align-items: center;
    justify-content: center;
    gap: 14px;
    width: 181px;
    height: 54px;
    border: 1px solid rgba(255, 255, 255, 0.2);
    border-radius: 8px;
    background: rgba(255, 255, 255, 0.2);
    font-size: 17.6px;
    font-weight: 600;
}
.update-icon {
    width: 20px;
    height: 20px;
}
.dash-grid {
    display: flex;
    flex: 1;
    min-height: 0;
    gap: 43px;
    padding: 43px 41px 0;
}
.dash-left {
    display: flex;
    flex-direction: column;
    flex: 0 0 972px;
    background: #fff;
}
.sessions-card {
    display: flex;
    flex-direction: column;
    align-items: center;
    flex: 0 0 372px;
    padding: 30px 30px 0 34px;
    border-bottom: 2px solid #edf0f4;
    border-radius: 16px;
    background: #fff;
    box-shadow: 0 0 6px rgba(0, 0, 0, 0.08);
}
.sessions-head {
    display: flex;
    align-items: center;
    align-self: stretch;
    margin-bottom: 70px;
}
.sessions-icon {
    width: 24px;
    height: 24px;
    margin-right: 12px;
    color: #3b6fc4;
}
.sessions-title {
    flex: 1;
    margin: 0;
    font-size: 25px;
    font-weight: 600;
    color: #2d3748;
}
.sessions-refresh {
    display: flex;
    align-items: center;
    justify-content: center;
    width: 40px;
    height: 42px;
    border-radius: 8px;
    background: #f0f2f5;
    color: #8a9099;
}
.sessions-refresh-icon {
    width: 18px;
    height: 18px;
}
.spinner {
    width: 40px;
    height: 40px;
    margin-bottom: 42px;
    border: 4px solid #eceef2;
    border-top-color: #3b6fc4;
    border-radius: 50%;
}
.loading-text {
    font-size: 20px;
    color: #718096;
}
.sessions-below {
    flex: 1;
}
.dash-right {
    display: flex;
    flex-direction: column;
    flex: 0 0 374px;
    gap: 19px;
}
.side-card {
    flex: 0 0 279px;
    border-radius: 16px;
    background: #fff;
    box-shadow: 0 4px 12px rgba(0, 0, 0, 0.06);
    overflow: hidden;
}
.side-card-fill {
    flex: 1;
    border-radius: 16px 16px 0 0;
}
.side-card-head {
    height: 72px;
    padding: 0 30px;
    background: linear-gradient(135deg, #667eea, #764ba2);
    color: #fff;
    font-size: 20.7px;
    font-weight: 600;
    line-height: 72px;
}
.side-card-body {
    padding: 38px 30px;
}
.kv {
    display: flex;
    justify-content: space-between;
    height: 50px;
    border-bottom: 2px solid #f1f3f6;
    font-size: 17.6px;
    line-height: 28px;
    color: #718096;
}
.kv-last {
    border-bottom: 0;
}
.kv-val {
    font-family: "DejaVu Sans Mono", monospace;
    font-size: 16px;
    color: #1a202c;
}
.back-link {
    display: flex;
    align-items: center;
    height: 64px;
    margin-top: 4px;
    padding-left: 17px;
    border: 1px solid #edf0f4;
    border-radius: 10px;
    background: #fbfbfc;
    font-size: 20.4px;
    color: #4a5568;
}
.back-icon {
    width: 24px;
    height: 24px;
    margin-right: 12px;
    color: #3b6fc4;
}

/* windows taskbar */
.taskbar {
    display: flex;
    align-items: center;
    flex: 0 0 60px;
    height: 60px;
    padding: 0 14px 0 26px;
    border-top: 1px solid #c2c9d6;
    background: linear-gradient(90deg, #e2e9f7, #d6e0f2 50%, #d9e0f0 70%, #dde8f5);
    font-family: "Open Sans", "Noto Sans", sans-serif;
    color: #222;
}
.tb-start {
    width: 30px;
    height: 30px;
}
.tb-search {
    display: flex;
    align-items: center;
    width: 272px;
    height: 40px;
    margin-left: 17px;
    padding: 0 8px 0 14px;
    border-radius: 20px;
    background: #f6f8fc;
    box-shadow: 0 1px 1px rgba(0, 0, 0, 0.2);
    font-size: 16px;
    color: #555;
}
.tb-search-icon {
    width: 21px;
    height: 21px;
    margin-right: 11px;
}
.tb-flower {
    width: 62px;
    height: 38px;
    margin-left: auto;
}
.tb-apps {
    display: flex;
    align-items: center;
    margin-left: 4px;
}
.tb-app {
    position: relative;
    display: flex;
    align-items: center;
    justify-content: center;
    width: 55px;
    height: 48px;
}
.tb-app-icon {
    width: 30px;
    height: 30px;
}
.tb-open::after,
.tb-current::after {
    content: "";
    position: absolute;
    left: 25px;
    bottom: -1px;
    width: 5px;
    height: 5px;
    border-radius: 50%;
    background: #777;
}
.tb-current {
    border-radius: 4px;
    background: rgba(255, 255, 255, 0.7);
}
.tb-current::after {
    left: 18px;
    width: 19px;
    border-radius: 2px;
    background: #1976d2;
}
.tb-weather {
    display: flex;
    align-items: center;
    gap: 7px;
    margin-left: 445px;
    font-size: 14.5px;
    line-height: 20px;
}
.tb-weather-icon {
    width: 32px;
    height: 32px;
}
.tb-dim {
    color: #555;
}
.tb-chevron {
    width: 20px;
    height: 20px;
    margin-left: 66px;
}
.tb-lang {
    margin-left: 25px;
    font-size: 15px;
    line-height: 21px;
    text-align: center;
}
.tb-tray {
    display: flex;
    gap: 8px;
    margin-left: 21px;
}
.tb-tray-icon {
    width: 22px;
    height: 22px;
}
.tb-clock {
    margin-left: 20px;
    font-size: 14.5px;
    line-height: 21px;
    text-align: right;
}
.tb-bell {
    width: 22px;
    height: 22px;
    margin-left: 8px;
}
```
